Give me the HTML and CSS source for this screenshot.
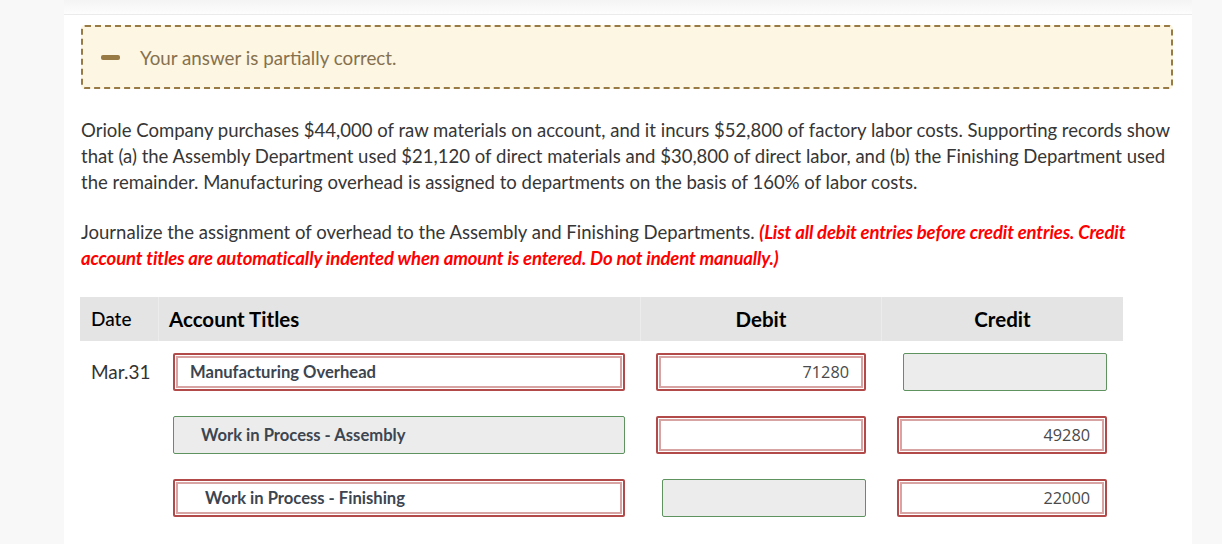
FILE: index.html
```html
<!DOCTYPE html>
<html>
<head>
<meta charset="utf-8">
<link rel="stylesheet" href="styles.css">
</head>
<body>
<div class="panel">
  <div class="topbar"></div>
  <div class="content">
    <div class="notice">
      <span class="minus"></span>
      <span class="notice-text">Your answer is partially correct.</span>
    </div>
    <p class="q">Oriole Company purchases $44,000 of raw materials on account, and it incurs $52,800 of factory labor costs. Supporting records show that (a) the Assembly Department used $21,120 of direct materials and $30,800 of direct labor, and (b) the Finishing Department used the remainder. Manufacturing overhead is assigned to departments on the basis of 160% of labor costs.</p>
    <p class="q q2">Journalize the assignment of overhead to the Assembly and Finishing Departments. <span class="hint">(List all debit entries before credit entries. Credit account titles are automatically indented when amount is entered. Do not indent manually.)</span></p>

    <div class="journal">
      <div class="jhead">
        <div class="h-date">Date</div>
        <div class="h-acct">Account Titles</div>
        <div class="h-amt">Debit</div>
        <div class="h-amt last">Credit</div>
      </div>

      <div class="jrow">
        <div class="c-date">Mar.31</div>
        <div class="c-acct"><div class="fld acct bad">Manufacturing Overhead</div></div>
        <div class="c-amt"><div class="fld amt bad">71280</div></div>
        <div class="c-amt"><div class="fld amt ok"></div></div>
      </div>

      <div class="jrow">
        <div class="c-date"></div>
        <div class="c-acct"><div class="fld acct ok ind1">Work in Process - Assembly</div></div>
        <div class="c-amt"><div class="fld amt bad"></div></div>
        <div class="c-amt"><div class="fld amt bad">49280</div></div>
      </div>

      <div class="jrow">
        <div class="c-date"></div>
        <div class="c-acct"><div class="fld acct bad ind2">Work in Process - Finishing</div></div>
        <div class="c-amt"><div class="fld amt ok"></div></div>
        <div class="c-amt"><div class="fld amt bad">22000</div></div>
      </div>
    </div>
  </div>
</div>
</body>
</html>
```

FILE: styles.css
```css
html, body {
  margin: 0;
  padding: 0;
}
body {
  background: #f8f8f8;
  font-family: Lato, "Open Sans", sans-serif;
  color: #363636;
  overflow: hidden;
}
.panel {
  margin-left: 64px;
  width: 1128px;
  height: 544px;
  background: #fff;
  overflow: hidden;
}
.topbar {
  height: 14px;
  border-bottom: 1px solid #ebebeb;
  background: linear-gradient(#f4f4f4, #fdfdfd);
}
.content {
  padding: 10px 0 0 17px;
}
.notice {
  box-sizing: border-box;
  width: 1092px;
  height: 64px;
  border: 2px dashed #987a45;
  border-radius: 4px;
  background: #fdf6e3;
  display: flex;
  align-items: center;
  padding-left: 18px;
}
.minus {
  width: 19px;
  height: 5px;
  border-radius: 2px;
  background: #987a45;
  margin-right: 20px;
}
.notice-text {
  font-size: 18.8px;
  color: #86714e;
}
.q {
  margin: 28px 0 0 0;
  width: 1100px;
  font-size: 18.55px;
  line-height: 26px;
  color: #363636;
}
.q2 {
  margin-top: 24px;
}
.hint {
  color: #f00;
  font-weight: bold;
  font-style: italic;
  letter-spacing: -0.15px;
}
.journal {
  margin: 26px 0 0 -1px;
  width: 1043px;
}
.jhead, .jrow {
  display: grid;
  grid-template-columns: 79px 482px 241px 241px;
}
.jhead {
  height: 44px;
  background: #e4e4e4;
  align-items: center;
  font-size: 20.5px;
  color: #000;
}
.jhead > div {
  height: 44px;
  line-height: 44px;
  border-right: 1px solid #ececec;
  box-sizing: border-box;
}
.jhead > div.last {
  border-right: none;
}
.h-date {
  padding-left: 11px;
  font-size: 19px;
  font-weight: 500;
}
.h-acct {
  padding-left: 10px;
  font-weight: bold;
}
.h-amt {
  text-align: center;
  font-weight: bold;
}
.jrow {
  height: 62.5px;
  align-items: start;
}
.jhead + .jrow {
  margin-top: 12px;
  height: 63px;
}
.c-date {
  padding-left: 11px;
  font-size: 19px;
  line-height: 38px;
  color: #333;
}
.c-acct, .c-amt {
  display: flex;
  justify-content: flex-end;
  padding-right: 16px;
}
.fld {
  box-sizing: border-box;
  height: 38px;
  border-radius: 2px;
  display: flex;
  align-items: center;
  background: #fff;
}
.fld.acct {
  width: 452px;
  font-size: 16.6px;
  font-weight: bold;
  color: #3c4550;
  padding-left: 15px;
}
.fld.amt {
  justify-content: flex-end;
  font-family: "Open Sans", "Noto Sans", sans-serif;
  font-size: 16.3px;
  color: #4a4a4a;
  padding-right: 15px;
}
.fld.bad {
  border: 2px solid #b34a4a;
  box-shadow: inset 0 0 0 1px #fff, inset 0 0 0 3px #d8a3a3;
}
.fld.ok {
  border: 1px solid #5e935f;
  background: #ececec;
}
.fld.amt.bad {
  width: 210px;
}
.fld.amt.ok {
  width: 204px;
}
.fld.acct.ind1 {
  padding-left: 27px;
}
.fld.acct.ind2 {
  padding-left: 30px;
}
```
